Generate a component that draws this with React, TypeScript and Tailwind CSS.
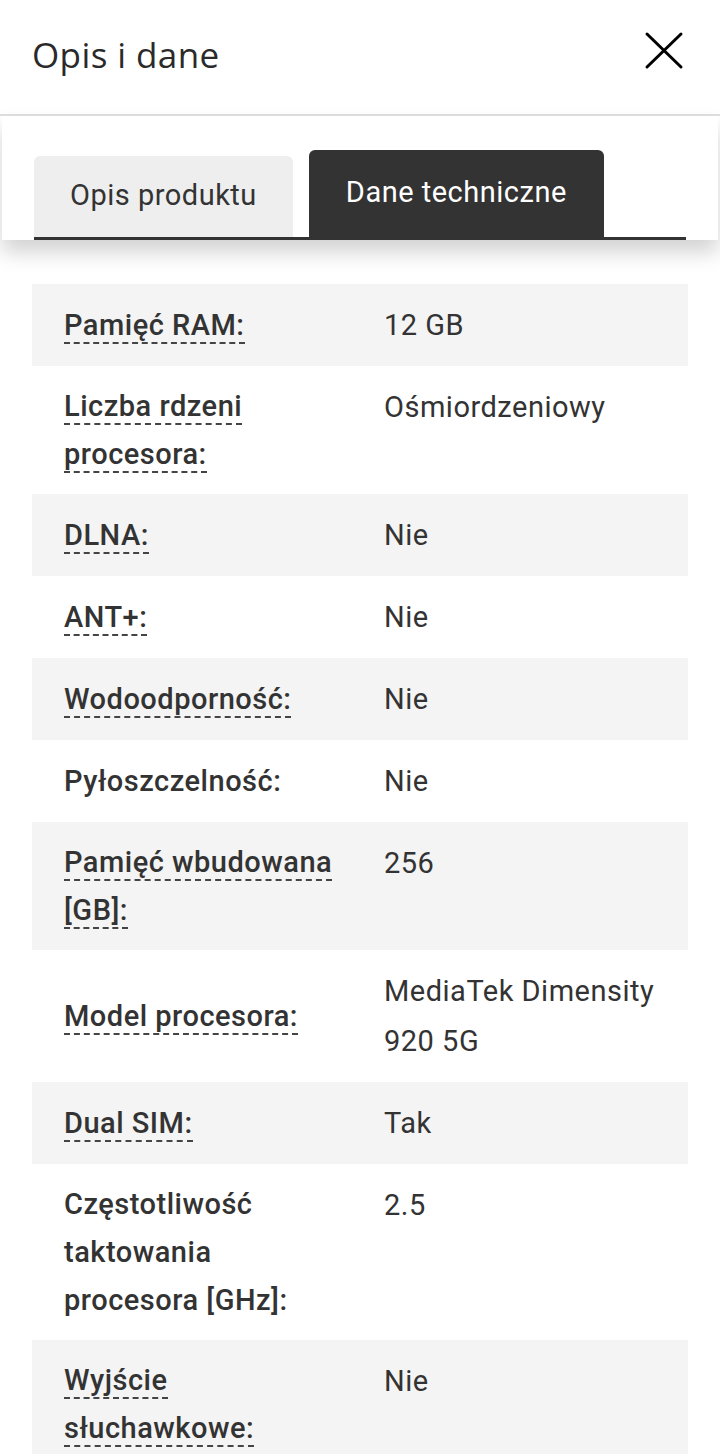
import React from "react";

type Row = { label: string; value: string[]; dashed: boolean };

const rows: Row[] = [
  { label: "Pamięć RAM:", value: ["12 GB"], dashed: true },
  { label: "Liczba rdzeni procesora:", value: ["Ośmiordzeniowy"], dashed: true },
  { label: "DLNA:", value: ["Nie"], dashed: true },
  { label: "ANT+:", value: ["Nie"], dashed: true },
  { label: "Wodoodporność:", value: ["Nie"], dashed: true },
  { label: "Pyłoszczelność:", value: ["Nie"], dashed: false },
  { label: "Pamięć wbudowana [GB]:", value: ["256"], dashed: true },
  { label: "Model procesora:", value: ["MediaTek Dimensity 920 5G"], dashed: true },
  { label: "Dual SIM:", value: ["Tak"], dashed: true },
  { label: "Częstotliwość taktowania procesora [GHz]:", value: ["2.5"], dashed: false },
  { label: "Wyjście słuchawkowe:", value: ["Nie"], dashed: true },
];

export default function App() {
  return (
    <div className="w-[720px] min-h-[1454px] bg-white text-[#333] overflow-hidden" style={{ fontFamily: "Roboto, 'Liberation Sans', sans-serif" }}>
      <header className="h-[116px] flex items-center justify-between pl-[32px] pr-[36px] border-b-2 border-[#e0e0e0]">
        <h1 className="text-[35px] text-[#2a2a2a] tracking-[0.4px] pb-[3px]" style={{ fontFamily: "'Open Sans', 'Liberation Sans', sans-serif" }}>Opis i dane</h1>
        <button className="w-[40px] h-[40px] flex items-center justify-center mb-[12px]">
          <svg width="40" height="40" viewBox="0 0 40 40" fill="none">
            <path d="M3 3 L37 36 M37 3 L3 36" stroke="#000" strokeWidth="3" strokeLinecap="round" />
          </svg>
        </button>
      </header>
      <div className="mx-[2px] bg-white shadow-[0_12px_20px_rgba(0,0,0,0.18)] pt-[34px] px-[32px]">
        <div className="flex items-end gap-[16px] border-b-[3px] border-[#333]">
          <div className="h-[81px] px-[36px] flex items-center bg-[#eeeeee] rounded-t-[6px] text-[29px] tracking-[0.5px] text-[#333] pb-[1px]">Opis produktu</div>
          <div className="h-[87px] px-[37px] flex items-center bg-[#333333] rounded-t-[6px] text-[29px] tracking-[0.5px] text-white pb-[2px]">Dane techniczne</div>
        </div>
      </div>
      <div className="mx-[32px] mt-[44px]">
        {rows.map((r, i) => (
          <div key={i} className={`flex py-[16px] ${i % 2 === 0 ? "bg-[#f4f4f4]" : "bg-white"}`}>
            <div className="w-[320px] pl-[32px] pr-[16px] self-center text-[29px] tracking-[0.5px] leading-[48px] font-medium text-[#333]">
              <span className={r.dashed ? "border-b-2 border-dashed border-[#444]" : ""}>{r.label}</span>
            </div>
            <div className="flex-1 pl-[32px] pr-[16px] text-[29px] tracking-[0.5px] leading-[50px] text-[#333]">
              {r.value.join(" ")}
            </div>
          </div>
        ))}
      </div>
    </div>
  );
}
